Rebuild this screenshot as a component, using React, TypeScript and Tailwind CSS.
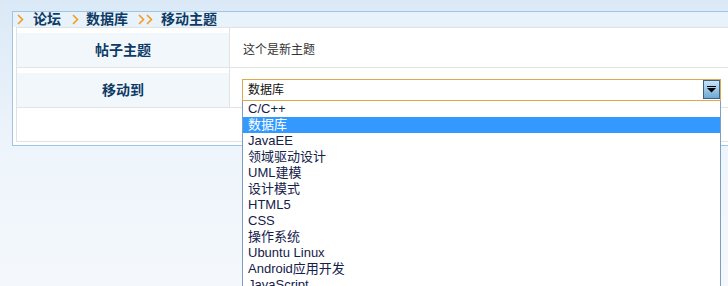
import React from 'react';

const options = [
  'C/C++',
  '数据库',
  'JavaEE',
  '领域驱动设计',
  'UML建模',
  '设计模式',
  'HTML5',
  'CSS',
  '操作系统',
  'Ubuntu Linux',
  'Android应用开发',
  'JavaScript',
  'Python',
];

function Chevron() {
  return (
    <svg width="7" height="11" viewBox="0 0 7 11" className="shrink-0">
      <polyline points="1,1 5.5,5.5 1,10" fill="none" stroke="#f59c1c" strokeWidth="1.6" />
    </svg>
  );
}

export default function App() {
  return (
    <div className="w-[728px] h-[286px] overflow-hidden bg-gradient-to-b from-[#dbe9f6] via-[#edf4fb] to-[#f4f8fc] pt-[11px] pl-[12px] font-['Liberation_Sans','Noto_Sans_CJK_SC',sans-serif]">
      <div className="w-[740px] h-[135px] border border-[#9ec4e6] bg-white">
        {/* breadcrumb */}
        <div className="h-[15px] bg-[#e8f2fb] flex items-center pl-[4px] text-[14px] leading-[15px] font-bold text-[#0e3b66]">
          <span className="w-[16px] flex"><Chevron /></span>
          <span>论坛</span>
          <span className="ml-[11px] w-[14px] flex"><Chevron /></span>
          <span>数据库</span>
          <span className="ml-[10px] w-[23px] flex gap-[1px]"><Chevron /><Chevron /></span>
          <span>移动主题</span>
        </div>

        <div className="mx-[3px] border border-[#e0e3e6]">
          <div className="h-[40px] flex border-b border-[#e3e3e3]">
            <div className="w-[212px] pt-[5px]">
              <div className="h-[34px] bg-[#f2f7fc] flex items-center justify-center text-[14px] font-bold text-[#0e3b66]">
                帖子主题
              </div>
            </div>
            <div className="border-l border-[#e3e3e3] flex-1 pl-[13px] pt-[5px] flex items-center text-[12px] text-[#333]">
              这个是新主题
            </div>
          </div>

          <div className="h-[40px] flex border-b border-[#e3e3e3]">
            <div className="w-[212px] pt-[5px]">
              <div className="h-[34px] bg-[#f2f7fc] flex items-center justify-center text-[14px] font-bold text-[#0e3b66]">
                移动到
              </div>
            </div>
            <div className="border-l border-[#e3e3e3] flex-1 pl-[12px] pt-[11px]">
              <div className="relative w-[479px] h-[22px] border border-[#e0a84c] bg-white text-[12px] leading-[20px] text-[#111] pl-[5px] z-10">
                数据库
                <div className="absolute right-[0px] top-[0px] w-[17px] h-[19px] border border-[#3d607f] bg-gradient-to-b from-[#c9e3f7] to-[#6ea9d6] flex items-center justify-center">
                  <svg width="9" height="7" viewBox="0 0 9 7">
                    <rect x="0" y="0" width="9" height="1" fill="#000" />
                    <polygon points="0,2 9,2 4.5,6.5" fill="#000" />
                  </svg>
                </div>
                <div className="absolute left-[-1px] top-[21px] w-[479px] h-[220px] bg-white border-x border-[#7f9dbc] text-[13px]">
                  {options.map((o, i) => (
                    <div
                      key={o}
                      className={
                        i === 1
                          ? 'h-[16px] leading-[16px] pl-[5px] bg-[#3399ff] text-white'
                          : 'h-[16px] leading-[16px] pl-[5px] text-[#14204a]'
                      }
                    >
                      {o}
                    </div>
                  ))}
                </div>
              </div>
            </div>
          </div>

          <div className="h-[33px]" />
        </div>
      </div>
    </div>
  );
}
